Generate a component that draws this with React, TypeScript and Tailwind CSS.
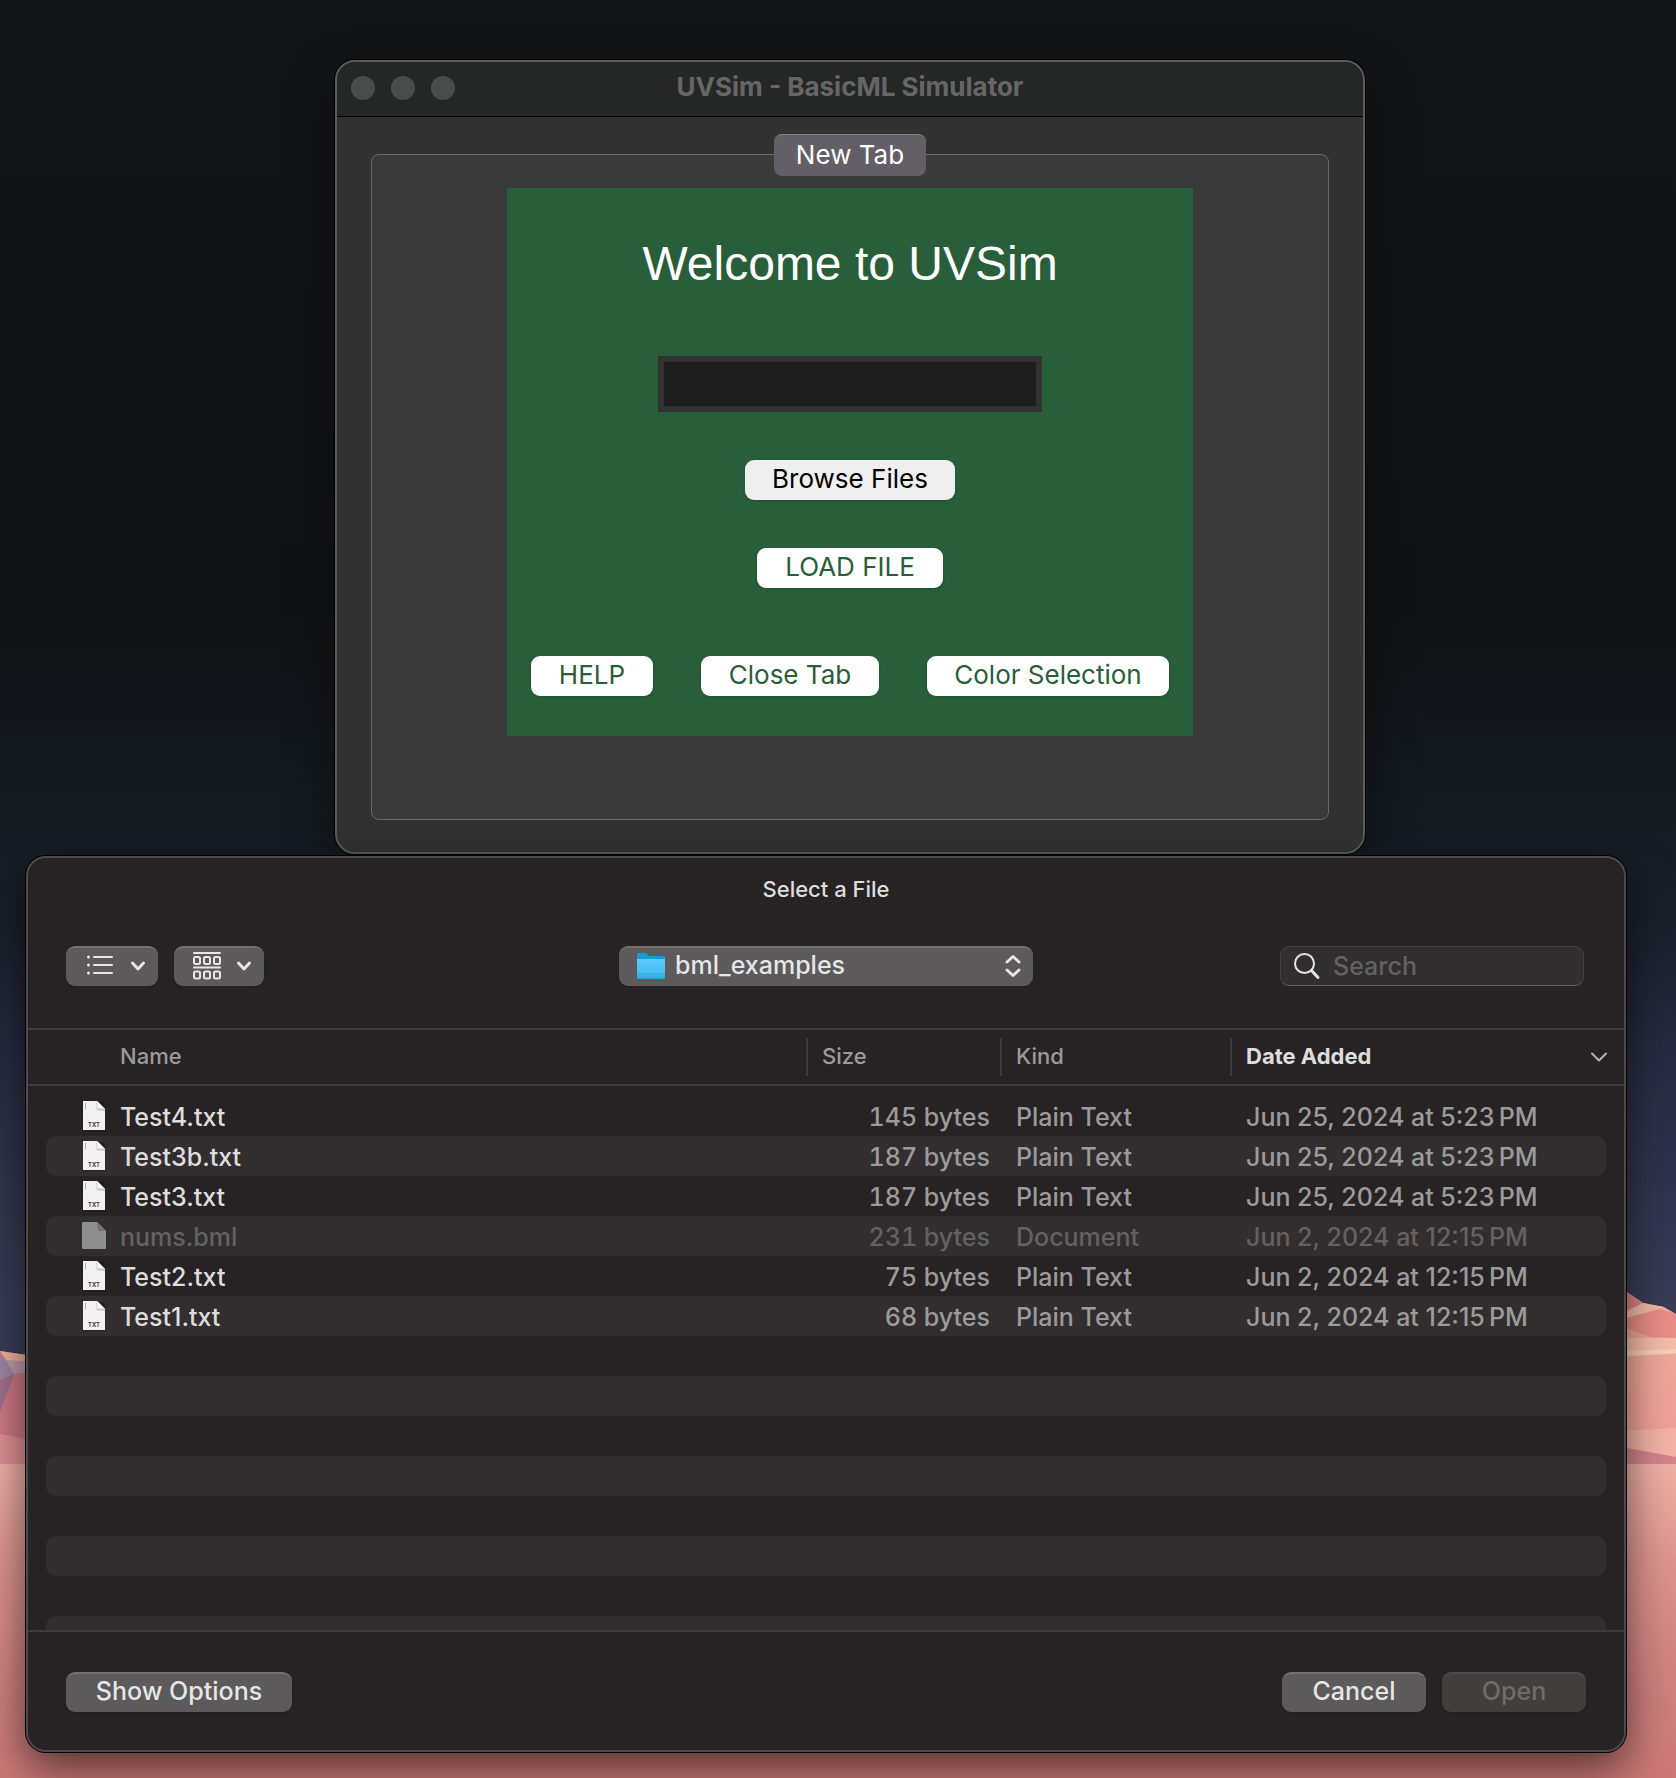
import React from "react";

const files = [
  { name: "Test4.txt", size: "145 bytes", kind: "Plain Text", date: "Jun 25, 2024 at 5:23\u2009PM", dim: false },
  { name: "Test3b.txt", size: "187 bytes", kind: "Plain Text", date: "Jun 25, 2024 at 5:23\u2009PM", dim: false },
  { name: "Test3.txt", size: "187 bytes", kind: "Plain Text", date: "Jun 25, 2024 at 5:23\u2009PM", dim: false },
  { name: "nums.bml", size: "231 bytes", kind: "Document", date: "Jun 2, 2024 at 12:15\u2009PM", dim: true },
  { name: "Test2.txt", size: "75 bytes", kind: "Plain Text", date: "Jun 2, 2024 at 12:15\u2009PM", dim: false },
  { name: "Test1.txt", size: "68 bytes", kind: "Plain Text", date: "Jun 2, 2024 at 12:15\u2009PM", dim: false },
];

function Wallpaper() {
  return (
    <svg className="absolute inset-0 h-full w-full" viewBox="0 0 1676 1778" preserveAspectRatio="none" aria-hidden="true">
      <defs>
        <linearGradient id="sky" x1="0" y1="0" x2="0" y2="1778" gradientUnits="userSpaceOnUse">
          <stop offset="0" stopColor="#131517" />
          <stop offset="0.34" stopColor="#111316" />
          <stop offset="0.45" stopColor="#151b20" />
          <stop offset="0.52" stopColor="#1b202b" />
          <stop offset="0.62" stopColor="#2b2e45" />
          <stop offset="0.74" stopColor="#3a3d57" />
        </linearGradient>
        <linearGradient id="sand" x1="0" y1="1465" x2="0" y2="1778" gradientUnits="userSpaceOnUse">
          <stop offset="0" stopColor="#eeb0a6" />
          <stop offset="0.3" stopColor="#dd9490" />
          <stop offset="0.7" stopColor="#cf8080" />
          <stop offset="1" stopColor="#ca7776" />
        </linearGradient>
        <linearGradient id="cliff" x1="0" y1="1340" x2="0" y2="1440" gradientUnits="userSpaceOnUse">
          <stop offset="0" stopColor="#f0a898" />
          <stop offset="1" stopColor="#f0a099" />
        </linearGradient>
      </defs>
      <rect width="1676" height="1778" fill="url(#sky)" />
      <path d="M0 1351 L60 1360 V1470 H0Z" fill="#cf7986" />
      <path d="M0 1351 L60 1360 V1368 L8 1363Z" fill="#f0b3a0" />
      <path d="M0 1355 Q10 1362 14 1374 L0 1380Z" fill="#9c87a5" />
      <path d="M6 1360 L60 1363 V1366 L14 1374Z" fill="#c19aac" />
      <path d="M0 1380 L14 1374 L0 1412Z" fill="#a1708f" />
      <path d="M0 1434 L60 1445 V1470 H0Z" fill="#e08f93" />
      <path d="M1600 1270 L1627 1292 L1643 1303 L1664 1307 L1676 1314 V1470 H1600Z" fill="url(#cliff)" />
      <path d="M1600 1270 L1627 1292 L1643 1303 L1600 1322Z" fill="#dd8281" />
      <path d="M1643 1303 L1664 1307 L1627 1318 V1312Z" fill="#f3bba6" />
      <path d="M1660 1309 L1676 1314 V1338 L1650 1337 L1627 1328 V1318Z" fill="#e98d88" />
      <path d="M1600 1338 H1676 V1354 L1600 1358Z" fill="#f4bca9" />
      <path d="M1600 1352 L1676 1349 V1353 L1600 1357Z" fill="#f8cdb8" />
      <path d="M1600 1432 L1676 1428 V1464 H1600Z" fill="#f4b2a5" />
      <path d="M1600 1443 L1676 1457 V1464 H1600Z" fill="#d5838f" />
      <rect y="1464" width="1676" height="314" fill="url(#sand)" />
    </svg>
  );
}

function FileIcon({ generic }: { generic: boolean }) {
  if (generic) {
    return (
      <svg width="24" height="30" viewBox="0 0 24 30" aria-hidden="true">
        <path d="M1 1H15L24 10V27a1 1 0 0 1-1 1H1a1 1 0 0 1-1-1V2a1 1 0 0 1 1-1Z" fill="#8f8e8e" />
        <path d="M15 1L24 10H17a1 1 0 0 1-1-1Z" fill="#757474" />
      </svg>
    );
  }
  return (
    <svg width="24" height="30" viewBox="0 0 24 30" aria-hidden="true">
      <path d="M1 1H23V30H1Z" fill="#161415" opacity="0.5" />
      <path d="M1 0H15L23 8V29H1Z" fill="#f1f1f1" />
      <path d="M15 8H23V10L14 9Z" fill="#bdbdbd" opacity="0.8" />
      <path d="M15 0L23 8H15Z" fill="#ffffff" />
      <path d="M15 0V8H23" fill="none" stroke="#c9c9c9" strokeWidth="1" />
      <path d="M3.5 2V8" stroke="#b0b0b0" strokeWidth="1" />
      <text x="12" y="26" textAnchor="middle" fontSize="6" fontWeight="700" fontFamily="Inter, sans-serif" fill="#444">
        TXT
      </text>
    </svg>
  );
}

function DownArrow() {
  return (
    <svg width="16" height="12" viewBox="0 0 16 12" fill="none" aria-hidden="true">
      <path d="M2.5 3L8 9L13.5 3" stroke="#e6e6e6" strokeWidth="3" strokeLinecap="round" strokeLinejoin="round" />
    </svg>
  );
}

function FormButton({ children, className }: { children: React.ReactNode; className: string }) {
  return (
    <button type="button" className={`h-10 rounded-[9px] pb-[2px] text-center text-[26px] leading-[38px] whitespace-nowrap shadow-sm ${className}`}>
      {children}
    </button>
  );
}

function Simulator() {
  return (
    <section
      aria-label="UVSim - BasicML Simulator"
      className="w-[1030px] max-w-full overflow-hidden rounded-[20px] border-2 border-[#5a5b5b] bg-[#323232] shadow-[0_0_0_1px_#000,0_20px_50px_rgba(0,0,0,0.45)]"
    >
      <header className="grid h-[55px] grid-cols-[1fr_auto_1fr] items-center border-b border-black bg-[#252726] pb-[2px]">
        <div className="flex gap-4 pl-[14px]">
          <span className="size-6 rounded-full bg-[#4a4c4b]" />
          <span className="size-6 rounded-full bg-[#4a4c4b]" />
          <span className="size-6 rounded-full bg-[#4a4c4b]" />
        </div>
        <h1 className="pb-[2px] text-[26px] leading-[30px] font-bold text-[#656766]">UVSim - BasicML Simulator</h1>
      </header>
      <div className="px-[34px] pt-[37px] pb-8">
        <div className="flex flex-col items-center rounded-lg border border-[#6a6a6a] bg-[#3a3a3a] pb-[83px]">
          <button
            type="button"
            className="-mt-[21px] h-[42px] w-[152px] rounded-lg border-t border-[#85828a] bg-[#625f67] pb-[2px] text-[26px] leading-[38px] text-white"
          >
            New Tab
          </button>
          <form className="mt-3 flex h-[548px] flex-col items-center bg-[#285e39] px-6 pt-[48px]">
            <h2 className="font-['Liberation_Sans',Arial,sans-serif] text-[48px] leading-[56px] text-white">Welcome to UVSim</h2>
            <input
              aria-label="File path"
              type="text"
              className="mt-16 h-14 w-[384px] border-6 border-[#333232] bg-[#1e1e1e] px-2 text-[26px] text-white outline-none"
            />
            <FormButton className="mt-12 w-[210px] bg-[#efefef] text-black">Browse Files</FormButton>
            <FormButton className="mt-12 w-[186px] bg-white text-[#285e39]">LOAD FILE</FormButton>
            <div className="mt-[68px] flex gap-12">
              <FormButton className="w-[122px] bg-white text-[#285e39]">HELP</FormButton>
              <FormButton className="w-[178px] bg-white text-[#285e39]">Close Tab</FormButton>
              <FormButton className="w-[242px] bg-white text-[#285e39]">Color Selection</FormButton>
            </div>
          </form>
        </div>
      </div>
    </section>
  );
}

function Toolbar() {
  return (
    <div className="grid grid-cols-[1fr_414px_1fr] items-center px-[38px]">
      <div className="flex gap-4">
        <button
          type="button"
          aria-label="List view"
          className="flex h-10 w-[92px] items-center justify-between rounded-[9px] border-t-2 border-[#727071] bg-[#5c5a5b] pr-3 pb-[2px] pl-5 shadow"
        >
          <svg width="28" height="22" viewBox="0 0 28 22" fill="none" stroke="#e6e6e6" strokeLinecap="round" aria-hidden="true">
            <path d="M8 2H26M8 10H26M8 18H26" strokeWidth="2" />
            <path d="M2.5 2h.01M2.5 10h.01M2.5 18h.01" strokeWidth="3" />
          </svg>
          <DownArrow />
        </button>
        <button
          type="button"
          aria-label="Group by"
          className="flex h-10 w-[90px] items-center justify-between rounded-[9px] border-t-2 border-[#727071] bg-[#5c5a5b] pr-3 pb-[2px] pl-[18px] shadow"
        >
          <svg width="30" height="30" viewBox="0 0 30 30" fill="none" stroke="#e6e6e6" strokeWidth="2" aria-hidden="true">
            <path d="M2 2H28M2 16.5H28" strokeLinecap="round" />
            <rect x="2" y="6" width="6" height="7" rx="1.5" />
            <rect x="12" y="6" width="6" height="7" rx="1.5" />
            <rect x="22" y="6" width="6" height="7" rx="1.5" />
            <rect x="2" y="20.5" width="6" height="7" rx="1.5" />
            <rect x="12" y="20.5" width="6" height="7" rx="1.5" />
            <rect x="22" y="20.5" width="6" height="7" rx="1.5" />
          </svg>
          <DownArrow />
        </button>
      </div>
      <div className="relative">
        <select
          aria-label="Folder"
          className="block h-10 w-full appearance-none rounded-[9px] border-t-2 border-[#727071] bg-[#5c5a5b] pb-1 pl-14 text-[25px] leading-[34px] font-medium text-[#e6e6e6] shadow outline-none"
        >
          <option>bml_examples</option>
        </select>
        <svg className="pointer-events-none absolute top-[6px] left-[17px]" width="30" height="28" viewBox="0 0 30 28" aria-hidden="true">
          <defs>
            <linearGradient id="folder" x1="0" y1="0" x2="0" y2="1">
              <stop offset="0" stopColor="#5ccbfb" />
              <stop offset="0.75" stopColor="#45bcf2" />
              <stop offset="1" stopColor="#22a2dd" />
            </linearGradient>
          </defs>
          <path d="M1 2.5A1.5 1.5 0 0 1 2.5 1H9q1 0 2 1l2 2H27.5A1.5 1.5 0 0 1 29 5.5V20H1Z" fill="#1a9ad6" />
          <path d="M1 7H29V25.5A1.5 1.5 0 0 1 27.5 27H2.5A1.5 1.5 0 0 1 1 25.5Z" fill="url(#folder)" />
          <path d="M1 22H29" stroke="#2fa9e0" strokeWidth="1" />
        </svg>
        <svg className="pointer-events-none absolute top-2 right-3" width="16" height="24" viewBox="0 0 16 24" fill="none" aria-hidden="true">
          <path
            d="M2 8L8 2.5L14 8M2 16L8 21.5L14 16"
            stroke="#e6e6e6"
            strokeWidth="3"
            strokeLinecap="round"
            strokeLinejoin="round"
          />
        </svg>
      </div>
      <label className="mr-[2px] flex h-10 w-[304px] items-center gap-3 justify-self-end rounded-[9px] border border-[#434041] border-b-[#625f60] bg-[#322e2f] pl-3">
        <svg width="28" height="28" viewBox="0 0 28 28" fill="none" stroke="#e6e6e6" aria-hidden="true">
          <circle cx="11.5" cy="11.5" r="9.5" strokeWidth="2" />
          <path d="M18.5 18.5L25 25.5" strokeWidth="3" strokeLinecap="round" />
        </svg>
        <input
          type="search"
          aria-label="Search"
          placeholder="Search"
          className="min-w-0 flex-1 bg-transparent text-[25px] leading-[34px] font-medium text-[#e6e6e6] outline-none placeholder:text-[#646162]"
        />
      </label>
    </div>
  );
}

function FileTable() {
  const cell = "border-y-2 border-[#3e3b3c] py-2";
  const divided = "-ml-[2px] border-l-2 border-[#3e3b3c] pb-[2px] pl-[14px]";
  return (
    <table className="w-full table-fixed border-separate border-spacing-0">
      <colgroup>
        <col />
        <col className="w-[194px]" />
        <col className="w-[230px]" />
        <col className="w-[392px]" />
      </colgroup>
      <thead>
        <tr className="text-left text-[22px] leading-[36px] text-[#9c9a9b]">
          <th className={`${cell} font-medium`}>
            <div className="pb-[2px] pl-[92px]">Name</div>
          </th>
          <th className={`${cell} font-medium`}>
            <div className={divided}>Size</div>
          </th>
          <th className={`${cell} font-medium`}>
            <div className={divided}>Kind</div>
          </th>
          <th className={`${cell} font-bold text-[#dedddd]`} aria-sort="descending">
            <div className={`flex items-center justify-between pr-4 ${divided}`}>
              Date Added
              <svg width="18" height="12" viewBox="0 0 18 12" fill="none" aria-hidden="true">
                <path d="M2 3.5L9 10.5L16 3.5" stroke="#b5b4b4" strokeWidth="2" strokeLinecap="round" strokeLinejoin="round" />
              </svg>
            </div>
          </th>
        </tr>
      </thead>
    </table>
  );
}

function FileRows() {
  return (
    <div className="h-[544px] overflow-hidden px-[18px] pt-[10px]">
      <table className="w-full table-fixed border-separate border-spacing-0">
        <colgroup>
          <col />
          <col className="w-[194px]" />
          <col className="w-[230px]" />
          <col className="w-[374px]" />
        </colgroup>
        <tbody>
          {files.map((f) => (
            <tr
              key={f.name}
              className={`h-10 text-[25px] leading-[30px] font-medium even:bg-[#322e2f] ${f.dim ? "text-[#646162]" : "text-[#9c9a9b]"}`}
            >
              <td className="rounded-l-[10px] p-0 pl-9">
                <div className={`flex items-center gap-[14px] ${f.dim ? "" : "text-[#dedddd]"}`}>
                  <FileIcon generic={f.dim} />
                  <span className="pt-[2px]">{f.name}</span>
                </div>
              </td>
              <td className="p-0 pt-[2px] pr-3 text-right tabular-nums">{f.size}</td>
              <td className="p-0 pt-[2px] pl-[14px]">{f.kind}</td>
              <td className="rounded-r-[10px] p-0 pt-[2px] pl-[14px] whitespace-nowrap">{f.date}</td>
            </tr>
          ))}
        </tbody>
      </table>
      <div className="flex flex-col gap-10 pt-10">
        <div className="h-10 shrink-0 rounded-[10px] bg-[#322e2f]" />
        <div className="h-10 shrink-0 rounded-[10px] bg-[#322e2f]" />
        <div className="h-10 shrink-0 rounded-[10px] bg-[#322e2f]" />
        <div className="h-10 shrink-0 rounded-[10px] bg-[#322e2f]" />
      </div>
    </div>
  );
}

function FileDialog() {
  const push = "h-10 rounded-[9px] border-t-2 pb-1 text-[25px] leading-[34px] font-medium shadow";
  return (
    <section
      role="dialog"
      aria-label="Select a File"
      className="overflow-hidden rounded-[20px] border-2 border-[#4d4a4b] bg-[#272324] shadow-[0_0_0_1px_#000,0_16px_44px_rgba(0,0,0,0.6)]"
    >
      <h2 className="pt-4 pb-[42px] text-center text-[22px] leading-[30px] font-medium text-[#dedddd]">Select a File</h2>
      <Toolbar />
      <div className="pt-[42px]">
        <FileTable />
        <FileRows />
      </div>
      <footer className="flex gap-4 border-t-2 border-[#3e3b3c] px-[38px] pt-10 pb-[38px]">
        <button type="button" className={`mr-auto w-[226px] border-[#727071] bg-[#5c5a5b] text-[#e6e6e6] ${push}`}>
          Show Options
        </button>
        <button type="button" className={`w-[144px] border-[#727071] bg-[#5c5a5b] text-[#e6e6e6] ${push}`}>
          Cancel
        </button>
        <button type="button" disabled className={`w-[144px] border-[#4c4b49] bg-[#403f3d] text-[#6e6c6c] ${push}`}>
          Open
        </button>
      </footer>
    </section>
  );
}

export default function App() {
  return (
    <main className="relative min-h-screen overflow-hidden bg-[#131517] font-[Inter,sans-serif]">
      <Wallpaper />
      <div className="relative pt-[60px] pb-[26px]">
        <div className="flex justify-center pl-6">
          <Simulator />
        </div>
        <div className="relative z-10 mt-[2px] mr-[50px] ml-[26px]">
          <FileDialog />
        </div>
      </div>
    </main>
  );
}
